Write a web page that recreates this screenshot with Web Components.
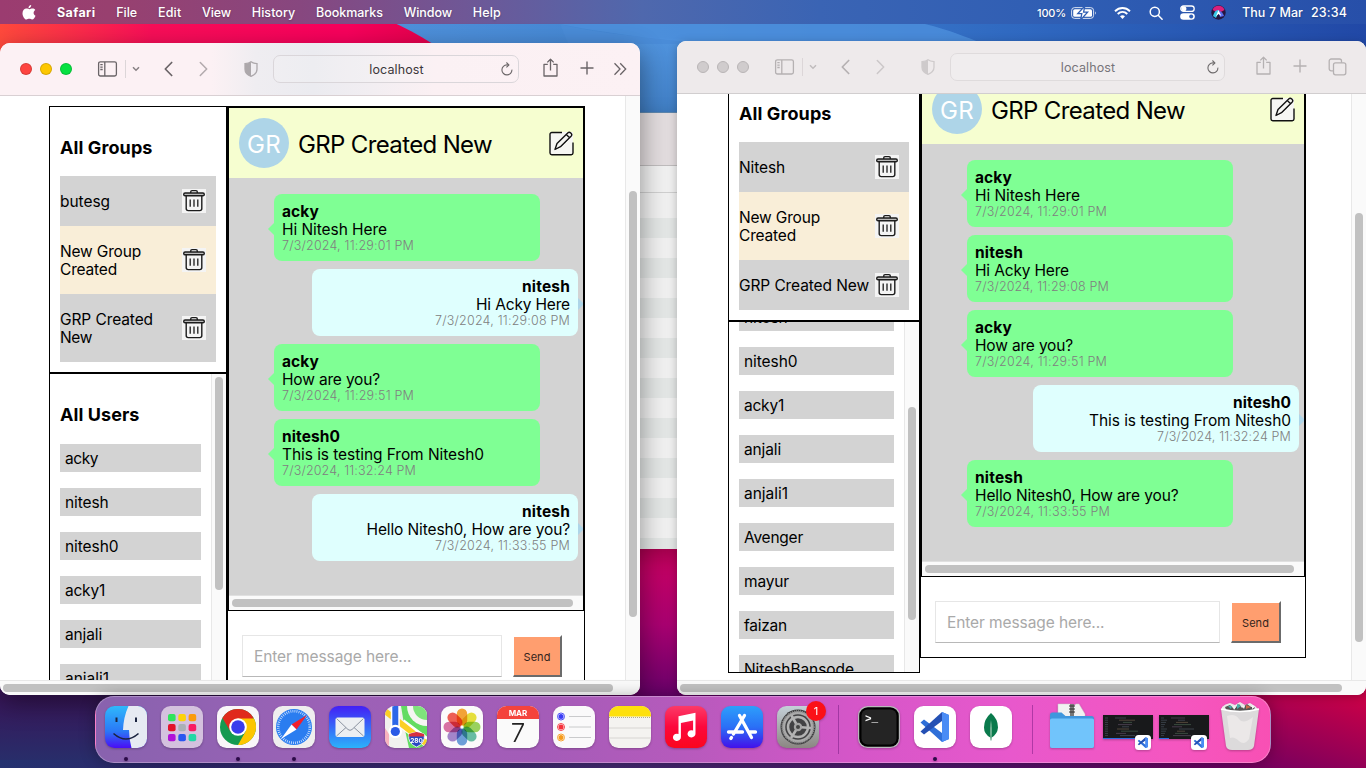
<!DOCTYPE html>
<html lang="en">
<head>
<meta charset="utf-8">
<title>Desktop</title>
<style>
html,body{margin:0;height:100%;overflow:hidden}
body{font-family:Inter,"Liberation Sans",sans-serif;color:#000}
</style>
</head>
<body>
<mac-desktop>
  <menu-bar slot="menu"></menu-bar>
  <safari-window slot="left" kind="active">
    <chat-app style="--gw:178px;--cw:358px;--ih:260px;--bw:49px;--ht:341px;--vt:3px;margin:10px 0 0 49px">
      <group-item slot="groups"><ui-text w="50">butesg</ui-text></group-item>
      <group-item slot="groups" tone="cream"><ui-text w="81">New Group</ui-text><br><ui-text w="57">Created</ui-text></group-item>
      <group-item slot="groups"><ui-text w="93">GRP Created</ui-text><br><ui-text w="32">New</ui-text></group-item>
      <user-item slot="users"><ui-text w="33">acky</ui-text></user-item>
      <user-item slot="users"><ui-text w="43.5">nitesh</ui-text></user-item>
      <user-item slot="users"><ui-text w="53.5">nitesh0</ui-text></user-item>
      <user-item slot="users"><ui-text w="40">acky1</ui-text></user-item>
      <user-item slot="users"><ui-text w="37">anjali</ui-text></user-item>
      <user-item slot="users"><ui-text w="44">anjali1</ui-text></user-item>
      <chat-bubble name="acky,37" body="Hi Nitesh Here|105" time="7/3/2024, 11:29:01 PM|132"></chat-bubble>
      <chat-bubble own name="nitesh,48" body="Hi Acky Here|94" time="7/3/2024, 11:29:08 PM|135"></chat-bubble>
      <chat-bubble name="acky,37" body="How are you?|98" time="7/3/2024, 11:29:51 PM|132"></chat-bubble>
      <chat-bubble name="nitesh0,58" body="This is testing From Nitesh0|202" time="7/3/2024, 11:32:24 PM|134"></chat-bubble>
      <chat-bubble own name="nitesh,48" body="Hello Nitesh0, How are you?|203.5" time="7/3/2024, 11:33:55 PM|135"></chat-bubble>
    </chat-app>
  </safari-window>
  <safari-window slot="right" kind="inactive">
    <chat-app scrolled style="--gw:192px;--cw:386px;--ih:285px;--bw:50px;--ht:369px;--vt:85px;--scroll:-29px;margin:-22px 0 0 51px">
      <group-item slot="groups"><ui-text w="46">Nitesh</ui-text></group-item>
      <group-item slot="groups" tone="cream"><ui-text w="81">New Group</ui-text><br><ui-text w="57">Created</ui-text></group-item>
      <group-item slot="groups"><ui-text w="130">GRP Created New</ui-text></group-item>
      <user-item slot="users"><ui-text w="43.5">nitesh</ui-text></user-item>
      <user-item slot="users"><ui-text w="53.5">nitesh0</ui-text></user-item>
      <user-item slot="users"><ui-text w="40">acky1</ui-text></user-item>
      <user-item slot="users"><ui-text w="37">anjali</ui-text></user-item>
      <user-item slot="users"><ui-text w="44">anjali1</ui-text></user-item>
      <user-item slot="users"><ui-text w="59">Avenger</ui-text></user-item>
      <user-item slot="users"><ui-text w="45">mayur</ui-text></user-item>
      <user-item slot="users"><ui-text w="43">faizan</ui-text></user-item>
      <user-item slot="users"><ui-text w="110">NiteshBansode</ui-text></user-item>
      <chat-bubble name="acky,37" body="Hi Nitesh Here|105" time="7/3/2024, 11:29:01 PM|132"></chat-bubble>
      <chat-bubble name="nitesh,48" body="Hi Acky Here|94" time="7/3/2024, 11:29:08 PM|134"></chat-bubble>
      <chat-bubble name="acky,37" body="How are you?|98" time="7/3/2024, 11:29:51 PM|132"></chat-bubble>
      <chat-bubble own name="nitesh0,58" body="This is testing From Nitesh0|202" time="7/3/2024, 11:32:24 PM|134"></chat-bubble>
      <chat-bubble name="nitesh,48" body="Hello Nitesh0, How are you?|203.5" time="7/3/2024, 11:33:55 PM|135"></chat-bubble>
    </chat-app>
  </safari-window>
  <mac-dock slot="dock"></mac-dock>
</mac-desktop>

<script>
function define(name, html, setup) {
  customElements.define(name, class extends HTMLElement {
    connectedCallback() {
      if (this.shadowRoot) return;
      const root = this.attachShadow({mode: 'open'});
      root.innerHTML = typeof html === 'function' ? html(this) : html;
      if (setup) setup(this, root);
    }
  });
}

/* Text that tracks its letters so that it takes the width given in "w". */
const fitted = [];
define('ui-text', `<style>:host{display:inline-block;white-space:nowrap}</style><span><slot></slot></span>`, (el) => fitted.push(el));
function fitAll() {
  const natural = fitted.map(el => el.getBoundingClientRect().width);
  fitted.forEach((el, i) => {
    const want = parseFloat(el.getAttribute('w')), n = el.textContent.length;
    if (want && n) el.style.letterSpacing = ((want - natural[i]) / n).toFixed(3) + 'px';
  });
}

define('mac-desktop', `<style>
:host{display:block;position:relative;width:1366px;height:768px;overflow:hidden}
.bg{position:absolute;inset:0}
::slotted([slot=menu]){position:absolute;left:0;top:0;width:1366px}
::slotted([slot=left]){position:absolute;left:0;top:43px;width:640px;height:652px}
::slotted([slot=right]){position:absolute;left:677px;top:41px;width:689px;height:654px}
::slotted([slot=dock]){position:absolute;left:95px;top:696px}
.back{position:absolute;left:560px;top:112px;width:130px;height:437px;display:flex;flex-direction:column;border-top:1px solid #5d86ad;box-sizing:border-box;
 box-shadow:0 8px 20px rgba(0,0,0,.25)}
.t{height:52px;background:#e2dcde;border-bottom:1px solid #bfbcbd}
.h{height:26px;background:#f0f0f0;border-bottom:1px solid #cfcfcf}
.s{flex:1;background:linear-gradient(#f0f0f0,#f0f0f0) 0 0/100% 25px no-repeat,repeating-linear-gradient(#e3e6e5 0 20px,#f0f0f0 20px 40px) 0 25px}
</style>
<svg class="bg" width="1366" height="768">
<defs>
<linearGradient id="b" x1="0" x2="1"><stop offset="0" stop-color="#5f9fe6"/><stop offset=".5" stop-color="#4285d2"/><stop offset=".75" stop-color="#2f68c0"/><stop offset="1" stop-color="#2148a6"/></linearGradient>
<linearGradient id="r" x1="0" x2="1"><stop offset="0" stop-color="#ff4a3c"/><stop offset=".35" stop-color="#f80e58"/><stop offset=".8" stop-color="#f8005c"/><stop offset="1" stop-color="#e4004c"/></linearGradient>
<linearGradient id="m" x1="0" x2="0" y1="0" y2="1"><stop offset="0" stop-color="#d0005f"/><stop offset=".5" stop-color="#a80070"/><stop offset="1" stop-color="#5a0068"/></linearGradient>
<linearGradient id="f" x1="0" x2="1"><stop offset="0" stop-color="#243370"/><stop offset=".12" stop-color="#2c2669"/><stop offset=".45" stop-color="#43286f"/><stop offset=".7" stop-color="#4e1468"/><stop offset=".9" stop-color="#6b0060"/><stop offset="1" stop-color="#6b005c"/></linearGradient>
<linearGradient id="c" x1="0" x2=".5" y1="1" y2="0"><stop offset="0" stop-color="#6f0060"/><stop offset="1" stop-color="#c80048"/></linearGradient>
<linearGradient id="lb" x1="0" x2="0" y1="0" y2="1"><stop offset="0" stop-color="#3a1458"/><stop offset="1" stop-color="#26306c"/></linearGradient>
<linearGradient id="w" x1="0" x2="0" y1="0" y2="1"><stop offset="0" stop-color="#4f92dc"/><stop offset="1" stop-color="#3a76ba"/></linearGradient>
</defs>
<rect width="1366" height="120" fill="url(#b)"/>
<path d="M0 20H388C404 27 419 35 433 44V60H0Z" fill="url(#r)"/>
<path d="M560 24C590 32 640 38 700 40V120H600Z" fill="#4a8cd8"/>
<path d="M640 24H925C950 30 965 37 982 43H700C670 40 620 36 560 24Z" fill="#4f92de" opacity=".75"/>
<rect x="560" y="44" width="130" height="100" fill="url(#w)"/>
<rect y="120" width="1366" height="648" fill="#3a1458"/>
<rect x="600" y="540" width="120" height="170" fill="url(#m)"/>
<rect y="690" width="130" height="78" fill="url(#lb)"/>
<rect y="760" width="1366" height="8" fill="url(#f)"/>
<rect x="1240" y="680" width="126" height="88" fill="url(#c)"/>
</svg>
<div class="back"><div class="t"></div><div class="h"></div><div class="s"></div></div>
<slot name="menu"></slot><slot name="right"></slot><slot name="left"></slot><slot name="dock"></slot>`);

define('menu-bar', `<style>
:host{display:flex;align-items:center;height:24px;box-sizing:border-box;padding:1px 19px 0 21px;color:#fff;font-size:12.5px;font-weight:500;
background:linear-gradient(90deg,#9b3c70 0,#98406f 8%,#87477f 22%,#6f5796 34%,#4f68ad 47%,#3a64b4 60%,#2f5eb4 78%,#274fa9 100%);text-shadow:0 1px 2px rgba(0,0,0,.25)}
svg{flex:none}
b{font-weight:700}
.m{display:flex;gap:20.700px;margin-left:21px;flex:1}
</style>
<svg width="15" height="17" viewBox="0 0 15 17" fill="#fff"><path d="M10.200 1c.1 1.600-1.200 3.200-2.700 3.200C7.300 2.700 8.700 1.200 10.200 1zM12.600 9c0-1.500.8-2.500 1.700-3.100C13.600 4.900 12.500 4.500 11.500 4.500c-1.400 0-2.100.7-3 .7-1 0-1.800-.7-3.100-.7C3.400 4.500 1.500 6.200 1.500 9.200c0 3 2 6.300 3.900 6.300 1 0 1.600-.7 2.900-.7 1.200 0 1.600.7 2.800.7 1.500 0 2.900-2.200 3.400-3.800C13.300 11.200 12.600 10.200 12.600 9z"/></svg>
<div class="m"><b><ui-text w="38.500">Safari</ui-text></b><ui-text w="21">File</ui-text><ui-text w="23.500">Edit</ui-text><ui-text w="29">View</ui-text><ui-text w="43.500">History</ui-text><ui-text w="67">Bookmarks</ui-text><ui-text w="48.500">Window</ui-text><ui-text w="28">Help</ui-text></div>
<ui-text w="29" style="font-size:11px">100%</ui-text>
<svg style="margin-left:5px" width="26" height="14" viewBox="0 0 26 14"><rect x=".6" y="1.600" width="22" height="10.800" rx="3" fill="none" stroke="#fff" stroke-opacity=".8"/><rect x="2.200" y="3.200" width="18.800" height="7.600" rx="1.600" fill="#fff"/><path d="M24 5.200q1.600 1.800 0 3.600z" fill="#fff"/><path d="M13.800 0L6.800 7.600h4L9.600 14l7-7.800h-4z" fill="#fff" stroke="#2f5eb4" stroke-width="1.300"/></svg>
<svg style="margin-left:17px" width="17" height="14" viewBox="0 0 17 14" fill="none" stroke="#fff" stroke-width="1.900"><path d="M1 5.200c4.400-4.200 10.600-4.200 15 0M3.700 8c2.800-2.600 6.800-2.600 9.600 0"/><path d="M8.500 13L6 10.300q2.500-1.900 5 0z" fill="#fff" stroke="none"/></svg>
<svg style="margin-left:18px" width="14" height="14" viewBox="0 0 14 14" fill="none" stroke="#fff" stroke-width="1.500"><circle cx="5.800" cy="5.800" r="4.600"/><path d="M9.200 9.200l3.900 4" stroke-linecap="round"/></svg>
<svg style="margin-left:17px" width="15" height="15" viewBox="0 0 15 15"><rect x=".8" y="1" width="13.400" height="5.400" rx="2.700" fill="none" stroke="#fff" stroke-width="1.300"/><circle cx="3.900" cy="3.700" r="2.500" fill="#fff"/><rect x=".2" y="8.200" width="14.600" height="6.600" rx="3.300" fill="#fff"/><circle cx="11.200" cy="11.500" r="2" fill="#2f5eb4"/></svg>
<svg style="margin-left:16px" width="15" height="15" viewBox="0 0 15 15"><circle cx="7.500" cy="7.500" r="7.200" fill="#25163f"/><path d="M1.500 5Q3 .8 7.500.8T13.500 5L8 8z" fill="#d8207c"/><path d="M2 11Q4 4 8 5q-1 4-3 8z" fill="#38c8e8"/><path d="M7 5q5 2 6 6l-4 1z" fill="#5a6cf0"/><path d="M7.500 5l2.800 6-2.800-2-2.700 2.500z" fill="#fff"/></svg>
<ui-text w="61" style="margin-left:16px">Thu 7 Mar</ui-text><ui-text w="36" style="margin-left:8px">23:34</ui-text>`);

define('safari-window', el => {
  const on = el.getAttribute('kind') === 'active';
  const reload = `<svg width="12" height="14" viewBox="0 0 12 14" fill="none" stroke="${on ? '#6b6668' : '#6d6a6b'}" stroke-width="1.100"><path d="M10.900 7.600A5 5 0 1 1 6 2.900h1.500"/><path d="M5.400.5L7.900 2.900 5.400 5.300"/></svg>`;
  return `<style>
:host{display:flex;flex-direction:column;border-radius:${on ? '10px' : '9px'};overflow:hidden;background:#fff;box-shadow:${on ? '0 8px 26px rgba(0,0,0,.42)' : '0 2px 10px rgba(0,0,0,.25)'}}
.bar{height:52px;flex:none;display:flex;align-items:center;box-sizing:border-box;padding-left:20px;border-bottom:0;color:${on ? '#6a6467' : '#b5b1b2'};
background:${on ? 'linear-gradient(90deg,#fcf1f4 0,#fcf1f4 33%,#efedf1 40%,#ebebf0 49%,#f2eef2 58%,#fbf0f3 68%,#fcf1f4 100%)' : '#eeeaeb'}}
.line{height:1px;flex:none;background:${on ? '#d9d0d3' : '#d1cecf'}}
.bar svg{flex:none;display:block}
.l{width:12px;height:12px;border-radius:50%;box-sizing:border-box;margin-right:8px;border:.5px solid rgba(0,0,0,.15);background:#d0cccd}
${on ? '' : '.l{border:1px solid #b9b5b6}'}
.url{height:28px;box-sizing:border-box;border:1px solid ${on ? '#dad6da' : '#dfdbdc'};border-radius:7px;display:flex;align-items:center;justify-content:center;position:relative;font-size:12.500px;color:${on ? '#3c383a' : '#77747a'};background:${on ? 'rgba(255,255,255,.12)' : '#f0edee'}}
.url svg{position:absolute;right:5px;top:6px}
.url ui-text{margin-left:1px}
.page{flex:1;min-height:0;display:grid;grid-template:minmax(0,1fr) 15px/minmax(0,1fr) 15px}
.view{overflow:hidden}
.v{background:#fafafa;border-left:1px solid #e8e8e8;padding:0 3px}
.h{grid-column:1/3;background:#fafafa;border-top:1px solid #e8e8e8}
.v i,.h i{display:block;background:#c1c1c1;border-radius:4px}
.v i{height:${on ? 426 : 429}px;margin-top:${on ? 95 : 119}px;width:8px}
.h i{height:8px;margin:3px 0 0 3px;width:${on ? 610 : 662}px}
</style>
<div class="bar">
<i class="l" style="${on ? 'background:#fe4440' : ''}"></i><i class="l" style="${on ? 'background:#fdc700' : ''}"></i><i class="l" style="${on ? 'background:#06e141' : ''}"></i>
<svg style="margin-left:17px" width="21" height="16" viewBox="0 0 21 16" fill="none" stroke="currentColor" stroke-width="1.300"><rect x="1.600" y=".8" width="17.800" height="14.200" rx="1.800"/><path d="M7.800 1v14M3.300 3.700h2.400M3.300 6.100h2.400M3.300 8.500h2.400"/></svg>
<svg style="margin-left:7px" width="1" height="18"><rect width="1" height="18" fill="#dcd6d8"/></svg>
<svg style="margin-left:6px;opacity:.8" width="8" height="6" viewBox="0 0 8 6" fill="none" stroke="currentColor" stroke-width="1.500"><path d="M1 1.300l3 3 3-3"/></svg>
<svg style="margin-left:24px" width="9" height="16" viewBox="0 0 9 16" fill="none" stroke="currentColor" stroke-width="1.700" stroke-linecap="round" stroke-linejoin="round"><path d="M7.700 1.500L1.300 8l6.400 6.500"/></svg>
<svg style="margin-left:26px;opacity:${on ? .5 : .6}" width="9" height="16" viewBox="0 0 9 16" fill="none" stroke="currentColor" stroke-width="1.500" stroke-linecap="round" stroke-linejoin="round"><path d="M1.300 1.500L7.700 8l-6.400 6.500"/></svg>
<svg style="margin-left:36px;opacity:${on ? .5 : .55}" width="14" height="16" viewBox="0 0 14 16"><path d="M7 .8C5.500 2 3.500 2.500 1 2.600v5.600c0 3.500 2.400 5.700 6 7.100 3.600-1.400 6-3.600 6-7.100V2.600C10.500 2.500 8.500 2 7 .8z" fill="none" stroke="currentColor" stroke-width="1.300"/><path d="M7 .8C5.500 2 3.500 2.500 1 2.600v5.600c0 3.500 2.400 5.700 6 7.100z" fill="currentColor"/></svg>
<div class="url" style="margin-left:15px;width:${on ? 246 : 275}px"><ui-text w="54.500">localhost</ui-text>${reload}</div>
<svg style="margin:-3px 0 0 ${on ? 24 : 31}px" width="15" height="19" viewBox="0 0 15 19" fill="none" stroke="currentColor" stroke-width="1.300"><path d="M4.800 6.300H1V18h13V6.300h-3.800M7.500 12.500V1.300M4.300 4.400l3.200-3.200 3.200 3.200" stroke-linejoin="round"/></svg>
<svg style="margin:-2px 0 0 22px" width="14" height="14" viewBox="0 0 14 14" stroke="currentColor" stroke-width="1.400"><path d="M7 .5v13M.5 7h13"/></svg>
${on ? `<svg style="margin-left:19px" width="14" height="14" viewBox="0 0 14 14" fill="none" stroke="currentColor" stroke-width="1.300"><path d="M1.500 1.300L7 7l-5.500 5.700M7.200 1.300L12.700 7l-5.500 5.700"/></svg>`
: `<svg style="margin:-1px 0 0 21px" width="19" height="18" viewBox="0 0 19 18" fill="none" stroke="currentColor" stroke-width="1.300"><rect x="5.500" y="4.800" width="12.300" height="12" rx="2"/><path d="M5.500 12.800H3.200a2 2 0 0 1-2-2V3a2 2 0 0 1 2-2h8.300a2 2 0 0 1 2 2v1.800"/></svg>`}
</div><div class="line"></div>
<div class="page"><div class="view"><slot></slot></div><div class="v"><i></i></div><div class="h"><i></i></div></div>`;
});

define('chat-app', el => `<style>
:host{display:flex;font-size:15.500px;width:calc(var(--gw) + var(--cw));height:601px}
.side{width:var(--gw);display:flex;flex-direction:column}
.box{border:1px solid #000;box-sizing:border-box}
.groups{padding:10px}
h3{font-size:18px;font-weight:700;line-height:22px;margin:20px 0 17px}
.users{height:352px;display:flex;overflow:hidden}
.list{flex:1;padding:10px 10px 0;margin-top:var(--scroll,0)}
.list h3{margin-bottom:18px}
.vs{width:11px;padding-left:3px;background:#fafafa;border-left:1px solid #e8e8e8}
.vs i{display:block;width:8px;height:213px;border-radius:4px;background:#c1c1c1;margin-top:var(--vt)}
.chat{width:var(--cw);height:586px;display:flex;flex-direction:column}
.room{border:1px solid #000;display:flex;flex-direction:column;height:502px}
header{height:50px;padding:10px;background:#f6fed0;display:flex;align-items:center;font-size:24px;font-weight:380}
.av{width:50px;height:50px;border-radius:50%;background:#aed5e8;color:#fff;display:flex;align-items:center;justify-content:center;margin-right:9px;flex:none;line-height:50px}
.av ui-text{margin-top:3px}
.ti{margin-top:2px}
header svg{margin:0 -1px 0 auto}
.msgs{height:401px;padding:16px 5px 0 45px;background:#d3d3d3;display:flex;flex-direction:column;gap:8px;overflow:hidden}
.hs{height:14px;background:#fafafa;border-top:1px solid #e0e0e0}
.hs i{display:block;width:var(--ht);height:8px;margin:3px;border-radius:4px;background:#c1c1c1}
.send{display:flex;gap:11px;padding:24px 0 0 14px}
.in{width:var(--ih);height:42px;box-sizing:border-box;border:1px solid #e6e6e6;border-bottom-color:#b8b8b8;padding-left:11px;color:#a9a9a9;line-height:41px}
.btn{width:var(--bw);height:42px;box-sizing:border-box;border:2px solid #6b6b6b;border-top-color:#fff;border-left:1px solid #fff;background:#ff9e6f;background-clip:padding-box;color:#33241c;font-size:11px;display:flex;align-items:center;justify-content:center;padding-top:1px}
</style>
<div class="side">
<div class="box groups"><h3><ui-text w="92.500">All Groups</ui-text></h3><slot name="groups"></slot></div>
<div class="box users"><div class="list">${el.hasAttribute('scrolled') ? '' : '<h3><ui-text w="79.500">All Users</ui-text></h3>'}<slot name="users"></slot></div><div class="vs"><i></i></div></div>
</div>
<div class="box chat"><div class="room">
<header><span class="av"><ui-text w="34">GR</ui-text></span><ui-text class="ti" w="194">GRP Created New</ui-text>
<svg width="25" height="25" viewBox="0 0 25 25" fill="none" stroke="#111" stroke-width="1.400" stroke-linejoin="round"><path d="M1 1h23v23H1z" fill="#f6f6f3" stroke="none"/><path d="M13 1.500H3A1.800 1.800 0 0 0 1 3.300V22a1.800 1.800 0 0 0 1.800 1.700h19.400A1.800 1.800 0 0 0 24 22V11.500"/><path d="M6 18.500l2-6L19 1.700q1.200-1.200 2.800.3 1.700 1.600.5 2.900L11.500 15.700zM17.300 3.500l3.300 3.200"/></svg></header>
<div class="msgs"><slot></slot></div><div class="hs"><i></i></div></div>
<div class="send"><div class="in"><ui-text w="157.500">Enter message here...</ui-text></div><div class="btn"><ui-text w="27">Send</ui-text></div></div>
</div>`);

define('group-item', el => `<style>
:host{display:flex;align-items:center;justify-content:space-between;background:${el.hasAttribute('tone') ? '#f9eed8' : '#d3d3d3'};padding:16px 10px 16px 0;line-height:18px;min-height:18px;box-sizing:border-box}
div{white-space:nowrap;padding-top:1px;margin-bottom:-1px}svg{flex:none;margin:-3px 0}
</style><div><slot></slot></div>
<svg width="24" height="24" viewBox="0 0 24 24" fill="none" stroke="#1c1c1c" stroke-width="1.400"><rect width="24" height="24" fill="#f4f4f4" stroke="none"/><path d="M8.700 4V2.900Q8.700 1.600 10 1.600h4Q15.300 1.600 15.300 2.900V4"/><rect x="1.700" y="4" width="20.600" height="2.800" rx="1.400" fill="#bbb"/><path d="M4.200 7v12.600q0 2 2 2h11.600q2 0 2-2V7"/><path d="M8.200 10.500v7.200M12 10.500v7.200M15.800 10.500v7.200" stroke-width="1.300"/></svg>`);

define('user-item', `<style>:host{display:block;height:28px;line-height:29px;background:#d3d3d3;padding-left:5px;margin-bottom:16px}</style><slot></slot>`);

define('chat-bubble', el => {
  const own = el.hasAttribute('own'), [n, nw] = el.getAttribute('name').split(',');
  const [b, bw] = el.getAttribute('body').split('|'), [t, tw] = el.getAttribute('time').split('|');
  return `<style>
:host{display:block;position:relative;width:250px;height:50px;flex:none;padding:9px 8px 8px;border-radius:8px;line-height:18px;background:${own ? '#dffffe' : '#7fff94'};${own ? 'align-self:flex-end;text-align:right' : ''}}
:host::before{content:"";position:absolute;top:29px;${own ? 'right:-6px;border-left:6px solid #aed5e8' : 'left:-6px;border-right:6px solid #7fff94'};border-top:6px solid transparent;border-bottom:6px solid transparent}
div{height:18px}.n{font-weight:700}.t{font-size:12.500px;line-height:15px;margin-top:-1px;color:#808080;font-weight:350}
</style><div class="n"><ui-text w="${nw}">${n}</ui-text></div><div><ui-text w="${bw}">${b}</ui-text></div><div class="t"><ui-text w="${tw}">${t}</ui-text></div>`;
});

const VS = `<path d="M28 6l7 3v24l-7 3L6.500 16.500l3.500-3L28 27z" fill="#2f6fd8"/><path d="M28 6v9L10 28.500l-3.500-3z" fill="#2450b4"/><path d="M28 6l7 3v24l-7 3z" fill="#4a8cf5"/>`;
const dots = ['#2fe45c','#fdd20a','#fb9a0c','#e3122a','#aab0b6','#f91a62','#b012d8','#2a56f0','#22d8a6'];
const petals = ['#f59a1c','#e6e022','#8ed04a','#55b89a','#5a94d8','#9a78c8','#d8609a','#f04a3c'];
const ART = {
finder: `<clipPath id="k"><rect width="42" height="42" rx="9.500"/></clipPath><linearGradient id="g" x2="0" y2="1"><stop stop-color="#2fb8fb"/><stop offset=".6" stop-color="#2a78f6"/><stop offset="1" stop-color="#4a0cf5"/></linearGradient><g clip-path="url(#k)"><rect width="42" height="42" fill="url(#g)"/><path d="M23.500 0Q18.500 11 18 24h6q0 9 2.500 18H42V0z" fill="#e6eaf2"/><path d="M11.500 11.500v4.500M31 11.500v4.500" stroke="#1b2440" stroke-width="2"/><path d="M8.500 27.500q12.500 11 25 0" fill="none" stroke="#1b2440" stroke-width="1.600"/></g>`,
launchpad: `<rect width="42" height="42" rx="9.500" fill="#d4c1de"/>` + dots.map((c,i)=>`<rect x="${7+(i%3)*10.300}" y="${8+Math.floor(i/3)*10}" width="7.600" height="7.200" rx="2" fill="${c}"/>`).join(''),
chrome: `<rect width="42" height="42" rx="9.500" fill="#f9f6f9"/><circle cx="21" cy="21" r="18" fill="#159a50"/><path d="M21 21L5.400 12A18 18 0 0 1 36.600 12z" fill="#e02a1c"/><path d="M21 12.500h15.900A18 18 0 0 1 21 39l7.500-13.500z" fill="#fcc600"/><path d="M5.400 12L13.500 25.500 17 14z" fill="#e02a1c"/><circle cx="21" cy="21" r="8.800" fill="#fff"/><circle cx="21" cy="21" r="6.800" fill="#3a3cec"/>`,
safari: `<rect width="42" height="42" rx="9.500" fill="#efeeee"/><circle cx="21" cy="21" r="18" fill="#2a7df0"/><circle cx="21" cy="21" r="15.800" fill="none" stroke="#cfe3ff" stroke-width="2.600" stroke-dasharray=".8 1.270"/><path d="M34 9L23.500 23.500 18.500 18.500z" fill="#f2202c"/><path d="M8 33L18.500 18.500l5 5z" fill="#fff"/>`,
mail: `<linearGradient id="g" x2="0" y2="1"><stop stop-color="#431ff5"/><stop offset="1" stop-color="#2bb2fb"/></linearGradient><rect width="42" height="42" rx="9.500" fill="url(#g)"/><rect x="6.500" y="11.500" width="29" height="19.500" rx="2" fill="#eceff2"/><path d="M7.500 12.500L19 23.500q2 1.700 4 0L34.500 12.500M7.500 30l9.500-8.500M34.500 30L25 21.500" fill="none" stroke="#8b93a0" stroke-width="1"/>`,
maps: `<clipPath id="k"><rect width="42" height="42" rx="9.500"/></clipPath><g clip-path="url(#k)"><rect width="42" height="42" fill="#f1f1ee"/><path d="M16 0h26v42H24l-4-18z" fill="#62dc62"/><circle cx="42" cy="0" r="20" fill="#f5f5f2"/><circle cx="42" cy="0" r="14" fill="#7fe47c"/><path d="M18 15L42 33M17 21l25 19" stroke="#fff" stroke-width="4"/><path d="M0 5l42 33" stroke="#fccf24" stroke-width="6"/><path d="M4 28v14H0V22z" fill="#f8b3be"/><path d="M10.300 0v25" stroke="#fff" stroke-width="9"/><path d="M10.300 0v25" stroke="#2d68e8" stroke-width="6"/><circle cx="10.300" cy="25.500" r="6.800" fill="#fff"/><circle cx="10.300" cy="25.500" r="4.600" fill="#2a5be6"/><path d="M24 28q3-1 7.500-2 4.500 1 7.500 2 2 9-7.500 13Q22 37 24 28z" fill="#2848c4" stroke="#fff" stroke-width=".8"/><path d="M24 28q3-1 7.500-2 4.500 1 7.500 2l.3 2.500H23.700z" fill="#d83040"/><text x="31.500" y="37" text-anchor="middle" font-size="6.500" font-weight="700" fill="#fff">280</text></g>`,
photos: `<rect width="42" height="42" rx="9.500" fill="#fbfafa"/>` + petals.map((c,i)=>`<rect x="15.800" y="2.500" width="10.400" height="17" rx="5.200" fill="${c}" style="mix-blend-mode:multiply" opacity=".88" transform="rotate(${i*45} 21 21)"/>`).join(''),
calendar: `<rect width="42" height="42" rx="9.500" fill="#fafafa"/><path d="M0 13V9.500A9.500 9.500 0 0 1 9.500 0h23A9.500 9.500 0 0 1 42 9.500V13z" fill="#f4433c"/><text x="21" y="10" text-anchor="middle" font-size="8" font-weight="700" fill="#fff">MAR</text><text x="21" y="36" text-anchor="middle" font-size="26" font-weight="300" fill="#222">7</text>`,
reminders: `<rect width="42" height="42" rx="9.500" fill="#faf9fa"/>` + ['#3a3cf5','#f5303a','#f59a1c'].map((c,i)=>`<circle cx="8" cy="${10.500+i*10.500}" r="3.500" fill="#fff" stroke="${c}" stroke-width=".9"/><circle cx="8" cy="${10.500+i*10.500}" r="2.500" fill="${c}"/><path d="M16 ${10.500+i*10.500}h22" stroke="#c4c4c6" stroke-width=".9"/>`).join(''),
notes: `<rect width="42" height="42" rx="9.500" fill="#f4f3f0"/><path d="M0 10.500v-1A9.500 9.500 0 0 1 9.500 0h23A9.500 9.500 0 0 1 42 9.500v1z" fill="#fee00c"/><path d="M0 11.500h42" stroke="#b5ae8a" stroke-dasharray="1 1"/><path d="M0 22h42M0 32h42" stroke="#d4d2ce" stroke-width=".9"/>`,
music: `<linearGradient id="g" x2="0" y2="1"><stop stop-color="#fc3a68"/><stop offset=".5" stop-color="#fc083c"/><stop offset="1" stop-color="#fb061e"/></linearGradient><rect width="42" height="42" rx="9.500" fill="url(#g)"/><path d="M13.500 10.200L30.500 6.800V27.500a4 3.600 0 1 1-2.400-3V14.500l-12.200 2.400V31a4 3.600 0 1 1-2.400-3z" fill="#fff"/>`,
appstore: `<linearGradient id="g" x2="0" y2="1"><stop stop-color="#2d9ffb"/><stop offset=".5" stop-color="#2a70f6"/><stop offset="1" stop-color="#4310ea"/></linearGradient><rect width="42" height="42" rx="9.500" fill="url(#g)"/><g stroke="#fff" stroke-width="3.300" stroke-linecap="round"><path d="M23.500 9.500L12.500 28M18.500 9.500L30.500 31.500M10.500 31.500l-.7 1M7.500 26h14M29 26h5.500"/></g>`,
settings: `<linearGradient id="g" x2="0" y2="1"><stop stop-color="#c4d0d8"/><stop offset="1" stop-color="#8b8682"/></linearGradient><rect width="42" height="42" rx="9.500" fill="url(#g)"/><circle cx="21" cy="21" r="17.500" fill="#3c3c3e"/><circle cx="21" cy="21" r="15.800" fill="#aaa" stroke="#8a8a8a" stroke-width="2" stroke-dasharray="1 1"/><circle cx="21" cy="21" r="12.800" fill="#424244"/><circle cx="21" cy="21" r="10" fill="none" stroke="#b3b3b3" stroke-width="2.500"/><path d="M21 21l13 1M21 21L14.500 9.500M21 21l-7 11" stroke="#b3b3b3" stroke-width="2.600"/><circle cx="21" cy="21" r="4.200" fill="#a4a4a4"/><circle cx="21" cy="21" r="2" fill="#444"/><circle cx="39" cy="5" r="10" fill="#fb1017"/><text x="39" y="9" text-anchor="middle" font-size="11" fill="#fff">1</text>`,
terminal: `<rect width="42" height="42" rx="9.500" fill="#b8b8ba"/><rect x="1.200" y="1.200" width="39.600" height="39.600" rx="8.600" fill="#000"/><rect x="3.500" y="3.500" width="35" height="35" rx="6" fill="#242424"/><text x="7" y="15.500" font-size="11" font-weight="700" fill="#fff" font-family="Liberation Mono,monospace">&gt;_</text>`,
vscode: `<rect width="42" height="42" rx="9.500" fill="#fff"/>${VS}`,
mongo: `<rect width="42" height="42" rx="9.500" fill="#fff"/><path d="M21 7Q28 13 28 21.500 27.500 28 21.700 31.500l-.4 3h-.6l-.4-3Q14 28 14 21.500 14 13 21 7z" fill="#0a7a4c"/><path d="M21 14q1 8 .3 20h-.6Q20 22 21 14z" fill="#b8d8c4"/>`,
folder: `<path d="M8 1h12l2 3 4-3h3l6 10v10H8z" fill="#f1f1f1" stroke="#ccc" stroke-width=".5"/><path d="M20 1h4v14h-4z" fill="#777"/><path d="M19 3h6M19 6h6M19 9h6" stroke="#333"/><path d="M0 12q0-2.500 2.500-2.500h9l4 3.500H41.500Q44 13 44 16v27q0 2-2 2H2q-2 0-2-2z" fill="#3f97dd"/><path d="M0 17q0-1.500 2-1.500h40q2 0 2 1.500v26q0 2-2 2H2q-2 0-2-2z" fill="#71c4fb"/>`,
trash: `<path d="M1 5Q4 2 9 1l5 2 5-3 5 3 5-2 5 3 3 3v5H1z" fill="#e8e8e8"/><path d="M4 5l5-2 4 4 5-5 3 4 5-4 4 3 4 0-2 5H6z" fill="#555"/><path d="M7 4l4 0-1 3zM16 2l4 2-4 3z" fill="#4ab0a8"/><path d="M25 3l5 2-5 2z" fill="#c86a4a"/><path d="M12 4l3 1-2 3zM21 4l3 0-1 3zM31 3l3 2-3 2z" fill="#f5f5f5"/><path d="M0 7q19 5 38 0L33 44q-1 4-6 4H11q-5 0-6-4z" fill="#dcdadb"/><path d="M6 14q8-3 12 3t14-2l-4 22q-5 7-10 2t-9-3z" fill="#ebe8e8"/><path d="M0 7q19 5 38 0" fill="none" stroke="#fff" stroke-width="1.400"/>`
};
const code = s => { let o = ''; for (let i = 0; i < 9; i++) o += `<path d="M${12 + (i * s) % 9} ${3 + i * 2.2}h${7 + (i * 5 + s) % 12}" stroke="${['#4c5560','#6b5a48','#47604e','#5a4a60'][(i + s) % 4]}" stroke-width=".7"/><path d="M2 ${3 + i * 2.2}h${3 + (i * s) % 4}" stroke="#46505a" stroke-width=".7"/>`; return o; };
const thumb = s => `<rect y="5" width="50" height="24" fill="#18191b"/><g transform="translate(0 5)">${code(s)}<path d="M0 23.500h${s > 5 ? 10 : 34}" stroke="#2f6fe0"/></g><rect x="32" y="25" width="16" height="15" rx="3.500" fill="#fff"/><g transform="translate(32.400 25) scale(.36)">${VS}</g>`;

define('dock-icon', el => {
  const n = el.getAttribute('name');
  const [w, h] = n === 'folder' ? [44, 45] : n === 'trash' ? [38, 48] : n.startsWith('thumb') ? [50, 40] : [42, 42];
  return `<style>:host{display:block;position:relative;width:${w}px;height:${h}px;filter:drop-shadow(0 1px 1px rgba(0,0,0,.25))}svg{display:block;overflow:visible}
  :host([run])::after{content:"";position:absolute;left:19px;top:51px;width:4px;height:4px;border-radius:2px;background:#2c0a48}</style>
  <svg width="${w}" height="${h}" viewBox="0 0 ${w} ${h}" font-family="Inter,sans-serif">${n === 'thumb1' ? thumb(4) : n === 'thumb2' ? thumb(7) : ART[n]}</svg>`;
});

define('mac-dock', `<style>
:host{display:flex;align-items:flex-start;box-sizing:border-box;width:1176px;height:67px;border-radius:19px;padding:9px 0 0 9px;gap:14px;border:1px solid rgba(255,255,255,.28);
background:linear-gradient(90deg,#8862ae 0,#9a62b6 18%,#a45cb8 38%,#b65abc 50%,#d456c8 64%,#e858cc 78%,#f556c0 92%,#f850b4 100%);box-shadow:0 0 16px rgba(0,0,0,.3)}
.d{width:1px;height:49px;background:rgba(90,10,110,.4);margin:-1px 5px 0}
</style>
<dock-icon name="finder" run></dock-icon><dock-icon name="launchpad"></dock-icon><dock-icon name="chrome" run></dock-icon><dock-icon name="safari" run></dock-icon><dock-icon name="mail"></dock-icon><dock-icon name="maps"></dock-icon><dock-icon name="photos"></dock-icon><dock-icon name="calendar"></dock-icon><dock-icon name="reminders"></dock-icon><dock-icon name="notes"></dock-icon><dock-icon name="music"></dock-icon><dock-icon name="appstore"></dock-icon><dock-icon name="settings"></dock-icon>
<div class="d"></div>
<dock-icon name="terminal"></dock-icon><dock-icon name="vscode" run></dock-icon><dock-icon name="mongo"></dock-icon>
<div class="d" style="margin-left:6px"></div>
<dock-icon name="folder" style="margin:-3px -5px 0 -2px"></dock-icon><dock-icon name="thumb1" style="margin-top:4px"></dock-icon><dock-icon name="thumb2" style="margin:4px -2px 0 -8px"></dock-icon><dock-icon name="trash" style="margin-top:-4px"></dock-icon>`);

fitAll();
</script>
</body>
</html>
